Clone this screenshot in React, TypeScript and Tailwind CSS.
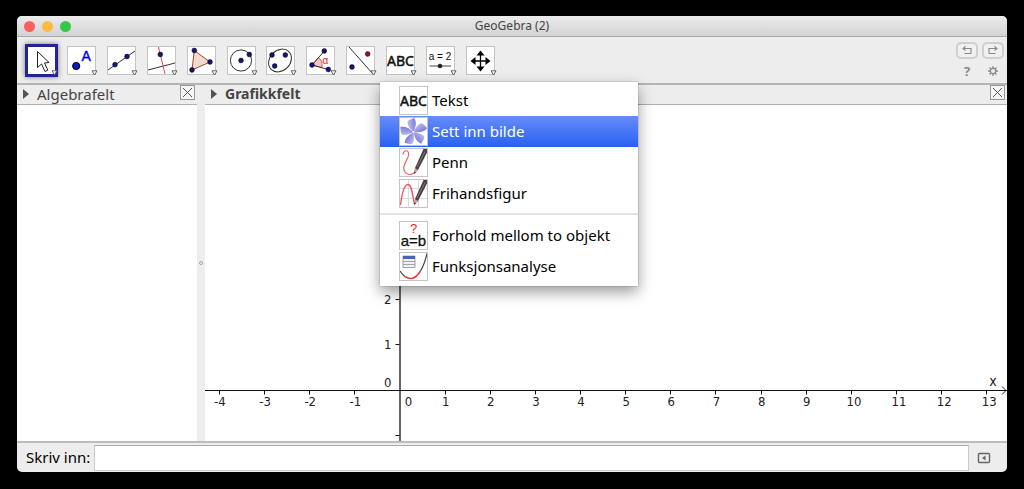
import type { ReactNode } from 'react'

const NAVY = '#14147d'

function Dot({ x, y, r = 2.4, fill = NAVY }: { x: number; y: number; r?: number; fill?: string }) {
    return <circle cx={x} cy={y} r={r} fill={fill} stroke="#000" strokeWidth={0.5} />
}

function Abc() {
    return (
        <text x="14.500" y="20" textAnchor="middle" fontSize="14" fontFamily="Noto Sans, sans-serif" fill="#111" stroke="#111" strokeWidth=".5">ABC</text>
    )
}

function Pen() {
    return (
        <g>
            <path d="M24.500 1H28v3.500L19 22l-3.500 3 .5-5z" fill="#4a3f42" />
            <path d="M26 3.500 18 19" stroke="#86787b" strokeWidth="1" />
            <path d="m16 20 3 2-4 4z" fill="#c9a58f" />
            <path d="m15.500 23.500 1.500 1-2 1.500z" fill="#222" />
        </g>
    )
}

const tools: { name: string; icon: ReactNode }[] = [
    {
        name: 'Flytt',
        icon: <path d="M10.500 5.500v16l4-3.500 3.500 7.500 2.800-1.300-3.300-7.200 4.500-.5z" fill="#fff" stroke="#222" />,
    },
    {
        name: 'Punkt',
        icon: (
            <>
                <circle cx="9.200" cy="20" r="3.600" fill="#1515c8" stroke="#000" />
                <text x="19.200" y="15" textAnchor="middle" fontSize="14" fontFamily="Liberation Sans, sans-serif" fill="#0000e6" stroke="#0000e6" strokeWidth=".4">A</text>
            </>
        ),
    },
    {
        name: 'Linje',
        icon: (
            <>
                <path d="M1 24 28 5" stroke="#333" />
                <Dot x={8} y={18.7} />
                <Dot x={20} y={10.5} />
            </>
        ),
    },
    {
        name: 'Normal linje',
        icon: (
            <>
                <path d="M1 24 28 17" stroke="#333" />
                <path d="M11.500 1 18 28" stroke="#f04550" />
                <Dot x={13.3} y={8.5} />
            </>
        ),
    },
    {
        name: 'Mangekant',
        icon: (
            <>
                <path d="M7.300 4.500 23 16 5 24z" fill="#f2d9cf" stroke="#9c4a25" />
                <Dot x={7.3} y={4.5} />
                <Dot x={23} y={16} />
                <Dot x={5} y={24} />
            </>
        ),
    },
    {
        name: 'Sirkel',
        icon: (
            <>
                <circle cx="14" cy="14.500" r="10.600" stroke="#333" />
                <Dot x={14} y={14.5} />
                <Dot x={22.3} y={8.5} />
            </>
        ),
    },
    {
        name: 'Ellipse',
        icon: (
            <>
                <ellipse cx="14" cy="14.500" rx="12.500" ry="10.200" transform="rotate(-45 14 14.500)" stroke="#333" />
                <Dot x={6} y={9} />
                <Dot x={19.3} y={9} />
                <Dot x={8.7} y={20} />
            </>
        ),
    },
    {
        name: 'Vinkel',
        icon: (
            <>
                <path d="M6 19 12.500 11.500A10 10 0 0 1 15.800 21.500z" fill="#f9c4c4" stroke="#e03a3a" strokeWidth=".8" />
                <path d="M18.300 5 6 19l16.300 4.500" stroke="#333" />
                <text x="19.500" y="18" textAnchor="middle" fontSize="10" fontFamily="Liberation Sans, sans-serif" fill="#ee1111">α</text>
                <Dot x={6} y={19} />
                <Dot x={18.3} y={5} />
                <Dot x={22.3} y={23.5} />
            </>
        ),
    },
    {
        name: 'Speiling',
        icon: (
            <>
                <path d="M3 1 27 28" stroke="#333" />
                <Dot x={21.7} y={8} fill="#a01414" />
                <Dot x={6} y={21} />
            </>
        ),
    },
    { name: 'Tekst', icon: <Abc /> },
    {
        name: 'Glidar',
        icon: (
            <>
                <text x="14" y="14" textAnchor="middle" fontSize="10" fontFamily="Liberation Sans, sans-serif" fill="#111">a = 2</text>
                <path d="M3.500 20H25" stroke="#444" />
                <Dot x={14} y={20} r={2} fill="#222" />
            </>
        ),
    },
    {
        name: 'Flytt grafikkfeltet',
        icon: (
            <g fill="#000">
                <path d="M14.500 7v16M6.500 15h16" stroke="#000" strokeWidth="1.300" />
                <path d="m14.500 4.500 4 5h-8zM14.500 25.500l4-5h-8zM4.500 15l5-4v8zM24.500 15l-5-4v8z" />
            </g>
        ),
    },
]

const menuItems: { label: string; icon: ReactNode }[] = [
    { label: 'Tekst', icon: <Abc /> },
    {
        label: 'Sett inn bilde',
        icon: (
            <>
                <defs>
                    <linearGradient id="petal" x1="0" y1="0" x2="1" y2="0">
                        <stop offset="0" stopColor="#b9b8f3" />
                        <stop offset="1" stopColor="#7f7cd8" />
                    </linearGradient>
                </defs>
                {[0, 72, 144, 216, 288].map((a) => (
                    <path
                        key={a}
                        d="M14 14.500C12.500 11 10.200 9 10.200 5 10.500 2.200 13.500 2.500 17.500 1.200c1.800 3.500 1 8-2.500 12.800z"
                        transform={`rotate(${a - 10} 14.500 15)`}
                        fill="url(#petal)"
                    />
                ))}
                <circle cx="14.500" cy="15" r="1" fill="#f4f4ff" />
            </>
        ),
    },
    {
        label: 'Penn',
        icon: (
            <>
                <path d="M4 6.500C5 1.500 9.500 1.500 9.700 6.500 9.800 10.500 5 14 4.800 19.500 4.800 25 9.500 28.500 15 25" stroke="#f0595f" strokeWidth="1.100" />
                <Pen />
            </>
        ),
    },
    {
        label: 'Frihandsfigur',
        icon: (
            <>
                <path d="M9.500 1v27M19.500 1v27M1 9.500h27M1 19.500h27" stroke="#d5dce3" />
                <path d="M1.500 26C3 14 5 5.500 9 5.500S13.500 17 15.500 25" stroke="#ee5a62" strokeWidth="1.400" />
                <Pen />
            </>
        ),
    },
    {
        label: 'Forhold mellom to objekt',
        icon: (
            <>
                <text x="14.500" y="12" textAnchor="middle" fontSize="13" fontFamily="Liberation Sans, sans-serif" fill="#e52222">?</text>
                <text x="14.500" y="25" textAnchor="middle" fontSize="15" fontFamily="Liberation Sans, sans-serif" fill="#111" stroke="#111" strokeWidth=".3">a=b</text>
            </>
        ),
    },
    {
        label: 'Funksjonsanalyse',
        icon: (
            <>
                <path d="M4 4h12v11.500H4z" fill="#f1f1f4" stroke="#8a8a94" strokeWidth=".8" />
                <path d="M4 4h12v3H4z" fill="#4a62b8" />
                <path d="M4 9.500h12M4 12.500h12" stroke="#8f9099" strokeWidth=".8" />
                <path d="M1 19c2 3 3 4 5 5.500M21.500 19C24.500 14 26.500 8 28 1.500" stroke="#444" strokeWidth="1.200" />
                <path d="M6 24.500C11.500 28 16 27.500 21.500 19" stroke="#e23b3b" strokeWidth="1.500" />
            </>
        ),
    },
]

function Icon({ children }: { children: ReactNode }) {
    return (
        <svg viewBox="1 1 27 27" className="w-[27px] h-[27px]" fill="none">
            {children}
        </svg>
    )
}

function CloseButton({ label }: { label: string }) {
    return (
        <button aria-label={label} className="w-[15px] h-[15px] mb-[2px] border border-[#999] bg-[#f6f6f6]">
            <svg viewBox="0 0 13 13" className="w-[13px] h-[13px]" fill="none" stroke="#555">
                <path d="m2 2 9 9M11 2l-9 9" />
            </svg>
        </button>
    )
}

function PanelHeader({ title, bold, close }: { title: string; bold?: boolean; close: string }) {
    return (
        <div className="h-5 flex items-center border-b border-[#b0b0b0] pl-[6px] pr-[2px] pb-[2px] text-[15px] leading-4 text-[#444]">
            <svg viewBox="0 0 6 10" className="w-[6px] h-[10px] mr-2" fill="#555">
                <path d="M0 0 6 5 0 10z" />
            </svg>
            <span className={bold ? 'flex-1 font-bold text-[14px]' : 'flex-1'}>{title}</span>
            <CloseButton label={close} />
        </div>
    )
}

const UNIT = 45.14
const X0 = 194.5
const Y0 = 285.5
const xTicks = Array.from({ length: 18 }, (_, i) => i - 4)
const yTicks = [-1, 1, 2, 3, 4, 5, 6]

function Graph() {
    return (
        <svg className="flex-1 w-full min-h-0" fontFamily="DejaVu Sans Condensed, DejaVu Sans, sans-serif" fontSize="13" fill="#222" stroke="none">
            <path d={`M${X0 + 0.5} 0v2000`} stroke="#666" strokeWidth="2" />
            <line x1="0" x2="100%" y1={Y0} y2={Y0} stroke="#111" />
            {xTicks.map((n) => (
                <g key={n}>
                    {n !== 0 && <path d={`M${Math.round(X0 + n * UNIT) + 0.5} ${Y0}v4`} stroke="#111" />}
                    <text x={X0 + n * UNIT + (n === 0 ? 9 : n > 9 ? 3 : 1)} y={Y0 + 15} textAnchor="middle">{n}</text>
                </g>
            ))}
            <text x={X0 - 8} y={Y0 - 4} textAnchor="end">0</text>
            {yTicks.map((n) => (
                <g key={n}>
                    <path d={`M${X0} ${Math.round(Y0 - n * UNIT) - 0.5}h-4`} stroke="#111" />
                    {n > 0 && <text x={X0 - 8} y={Y0 - n * UNIT + 4} textAnchor="end">{n}</text>}
                </g>
            ))}
            <svg x="100%" y={Y0} overflow="visible">
                <path d="m-5-4 4 4-4 4" fill="none" stroke="#222" />
                <text x="-14" y="-5" textAnchor="middle" fontSize="14">x</text>
            </svg>
        </svg>
    )
}

function ToolMenu() {
    return (
        <div role="menu" className="absolute left-[363px] top-[66px] w-[258px] pt-[3px] pb-1 bg-white shadow-[0_6px_14px_rgba(0,0,0,0.4),0_0_1px_rgba(0,0,0,0.5)]">
            {menuItems.map((item, idx) => (
                <div key={item.label}>
                    {idx === 4 && <div className="h-[11px] pt-1"><hr className="border-t-2 border-[#e4e4e4]" /></div>}
                    <button
                        role="menuitem"
                        className={`w-full h-[31px] flex items-center gap-1 pl-[19px] text-[15px] text-left ${idx === 1 ? 'bg-linear-to-b from-[#668cf7] to-[#2660f3] text-white' : 'text-black'}`}
                    >
                        <span className="border border-[#c4c4c4] bg-white"><Icon>{item.icon}</Icon></span>
                        {item.label}
                    </button>
                </div>
            ))}
        </div>
    )
}

function App() {
    return (
        <div className="h-screen bg-black px-[17px] pt-4 pb-[17px] font-['Noto_Sans',sans-serif]">
            <div className="relative h-full flex flex-col rounded-[5px] bg-[#ededed]">
                {/* Title bar */}
                <header className="relative h-[21px] shrink-0 flex items-center justify-center rounded-t-[5px] border-b border-[#a8a8a8] bg-linear-to-b from-[#ebebeb] to-[#d3d3d3] text-[12px] text-[#444]">
                    <div className="absolute left-[7px] flex gap-[7px]">
                        <span className="w-[11px] h-[11px] rounded-full bg-[#fc605c]" />
                        <span className="w-[11px] h-[11px] rounded-full bg-[#fdbc40]" />
                        <span className="w-[11px] h-[11px] rounded-full bg-[#34c84a]" />
                    </div>
                    GeoGebra (2)
                </header>

                {/* Tool bar */}
                <div className="h-12 shrink-0 flex items-center justify-between border-b-2 border-[#b4b4b4] pl-[5px] pr-[3px]">
                    <div className="grid grid-cols-12 w-[478px] items-center justify-items-center">
                        {tools.map((tool, idx) => (
                            <button
                                key={tool.name}
                                aria-label={tool.name}
                                className={idx === 0 ? 'relative border-3 border-[#242494] bg-white shadow-[0_0_5px_#777]' : 'relative border border-[#c4c4c4] bg-white'}
                            >
                                <Icon>{tool.icon}</Icon>
                                <svg viewBox="0 0 7 6" className="absolute -right-[3px] -bottom-[2px] w-[7px] h-[6px]" fill="#fff" stroke="#555" strokeWidth=".9">
                                    <path d="M1 .8h5L3.500 5z" />
                                </svg>
                            </button>
                        ))}
                    </div>
                    <div className="grid grid-cols-2 gap-x-1 gap-y-1 justify-items-center text-[#888]">
                        <button aria-label="Angre" className="w-[22px] h-[17px] flex items-center justify-center rounded-[5px] border-2 border-[#cfcfcf] bg-[#f0f0f0]">
                            <svg viewBox="0 0 10 8" className="w-[10px] h-2" fill="none" stroke="currentColor" strokeWidth="1.100">
                                <path d="M1 2.500h8v5H2.500M3.500 .3 1 2.500l2.500 2.200" />
                            </svg>
                        </button>
                        <button aria-label="Gjer om" className="w-[22px] h-[17px] flex items-center justify-center rounded-[5px] border-2 border-[#cfcfcf] bg-[#f0f0f0]">
                            <svg viewBox="0 0 10 8" className="w-[10px] h-2" fill="none" stroke="currentColor" strokeWidth="1.100">
                                <path d="M9 2.500H1v5h6.500M6.500 .3 9 2.500 6.500 4.700" />
                            </svg>
                        </button>
                        <button aria-label="Hjelp" className="h-4 leading-4 text-[13px] font-bold">?</button>
                        <button aria-label="Innstillingar" className="h-4">
                            <svg viewBox="0 0 12 12" className="w-3 h-3" fill="none" stroke="currentColor">
                                <circle cx="6" cy="6" r="2.700" strokeWidth="1.200" />
                                <path d="M6 1v2.300M6 8.700V11M1 6h2.300M8.700 6H11M2.500 2.500l1.600 1.600M7.900 7.900l1.600 1.600M9.500 2.500 7.900 4.100M4.100 7.900 2.500 9.500" strokeWidth="1.300" />
                            </svg>
                        </button>
                    </div>
                </div>

                {/* Views */}
                <main className="flex-1 min-h-0 flex">
                    <section className="w-[180px] flex flex-col">
                        <PanelHeader title="Algebrafelt" close="Lukk algebrafelt" />
                        <div className="flex-1 bg-white" />
                    </section>
                    <div className="w-2 flex items-center justify-center">
                        <span className="w-1 h-1 rounded-full border border-[#aaa]" />
                    </div>
                    <section className="flex-1 flex flex-col bg-white">
                        <div className="bg-[#ededed]">
                            <PanelHeader title="Grafikkfelt" bold close="Lukk grafikkfelt" />
                        </div>
                        <Graph />
                    </section>
                </main>

                {/* Input bar */}
                <footer className="h-[31px] shrink-0 flex items-center border-t-2 border-[#bcbcbc] pl-[9px] pr-4">
                    <label htmlFor="command" className="w-[68px] text-[15px] text-black">Skriv inn:</label>
                    <input id="command" type="text" className="flex-1 h-[26px] px-1 border border-[#ccc] border-t-[#aaa] bg-white text-[15px] outline-none" />
                    <button aria-label="Inntastingshjelp" className="ml-2">
                        <svg viewBox="0 0 14 12" className="w-[14px] h-3" fill="none" stroke="#666" strokeWidth="1.400">
                            <rect x="1.500" y="1.500" width="11" height="9" rx="1" />
                            <path d="M8.500 3.500v5L5 6z" fill="#666" stroke="none" />
                        </svg>
                    </button>
                </footer>

                <ToolMenu />
            </div>
        </div>
    )
}

export default App
